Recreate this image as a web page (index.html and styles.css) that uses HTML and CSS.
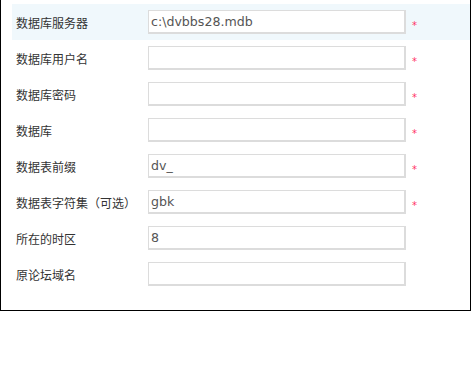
FILE: index.html
```html
<!DOCTYPE html>
<html lang="zh-CN">
  <head>
    <meta charset="UTF-8" />
    <title>数据库设置</title>
    <link rel="stylesheet" href="styles.css">
  </head>
  <body>
    <!-- 数据库配置表单 -->
    <div class="panel">
      <div class="form">
        <div class="row active">
          <label class="label">数据库服务器</label>
          <input class="field" type="text" value="c:\dvbbs28.mdb" />
          <span class="must">*</span>
        </div>
        <div class="row">
          <label class="label">数据库用户名</label>
          <input class="field" type="text" value="" />
          <span class="must">*</span>
        </div>
        <div class="row">
          <label class="label">数据库密码</label>
          <input class="field" type="text" value="" />
          <span class="must">*</span>
        </div>
        <div class="row">
          <label class="label">数据库</label>
          <input class="field" type="text" value="" />
          <span class="must">*</span>
        </div>
        <div class="row">
          <label class="label">数据表前缀</label>
          <input class="field" type="text" value="dv_" />
          <span class="must">*</span>
        </div>
        <div class="row">
          <label class="label">数据表字符集（可选）</label>
          <input class="field" type="text" value="gbk" />
          <span class="must">*</span>
        </div>
        <div class="row">
          <label class="label">所在的时区</label>
          <input class="field" type="text" value="8" />
          <span class="must"></span>
        </div>
        <div class="row">
          <label class="label">原论坛域名</label>
          <input class="field" type="text" value="" />
          <span class="must"></span>
        </div>
      </div>
    </div>
  </body>
</html>
```

FILE: styles.css
```css
* {
  padding: 0;
  margin: 0;
  box-sizing: border-box;
}

body {
  font-family: "Noto Sans CJK SC", "DejaVu Sans", sans-serif;
  font-size: 12px;
  color: #333;
  background-color: #fff;
}

.panel {
  width: 471px;
  height: 311px;
  padding: 4px 0 0 11px;
  border: 1px solid #000;
  border-top: none;
}

.form .row {
  display: grid;
  grid-template-columns: 136px 258px auto;
  align-items: center;
  height: 36px;
}

.form .row.active {
  background-color: #f0f8fc;
}

.form .label {
  padding-left: 4px;
  white-space: nowrap;
}

.form .field {
  width: 258px;
  height: 24px;
  padding: 0 2px;
  border: 1px solid #dcdcdc;
  border-right-width: 2px;
  border-bottom-width: 2px;
  outline: none;

  font-family: "DejaVu Sans", Verdana, sans-serif;
  font-size: 12.6px;
  color: #555;
  background-color: #fff;
}

.form .must {
  padding: 7px 0 0 6px;
  font-family: "DejaVu Sans", sans-serif;
  font-size: 10px;
  line-height: 10px;
  color: #f36;
}
```
